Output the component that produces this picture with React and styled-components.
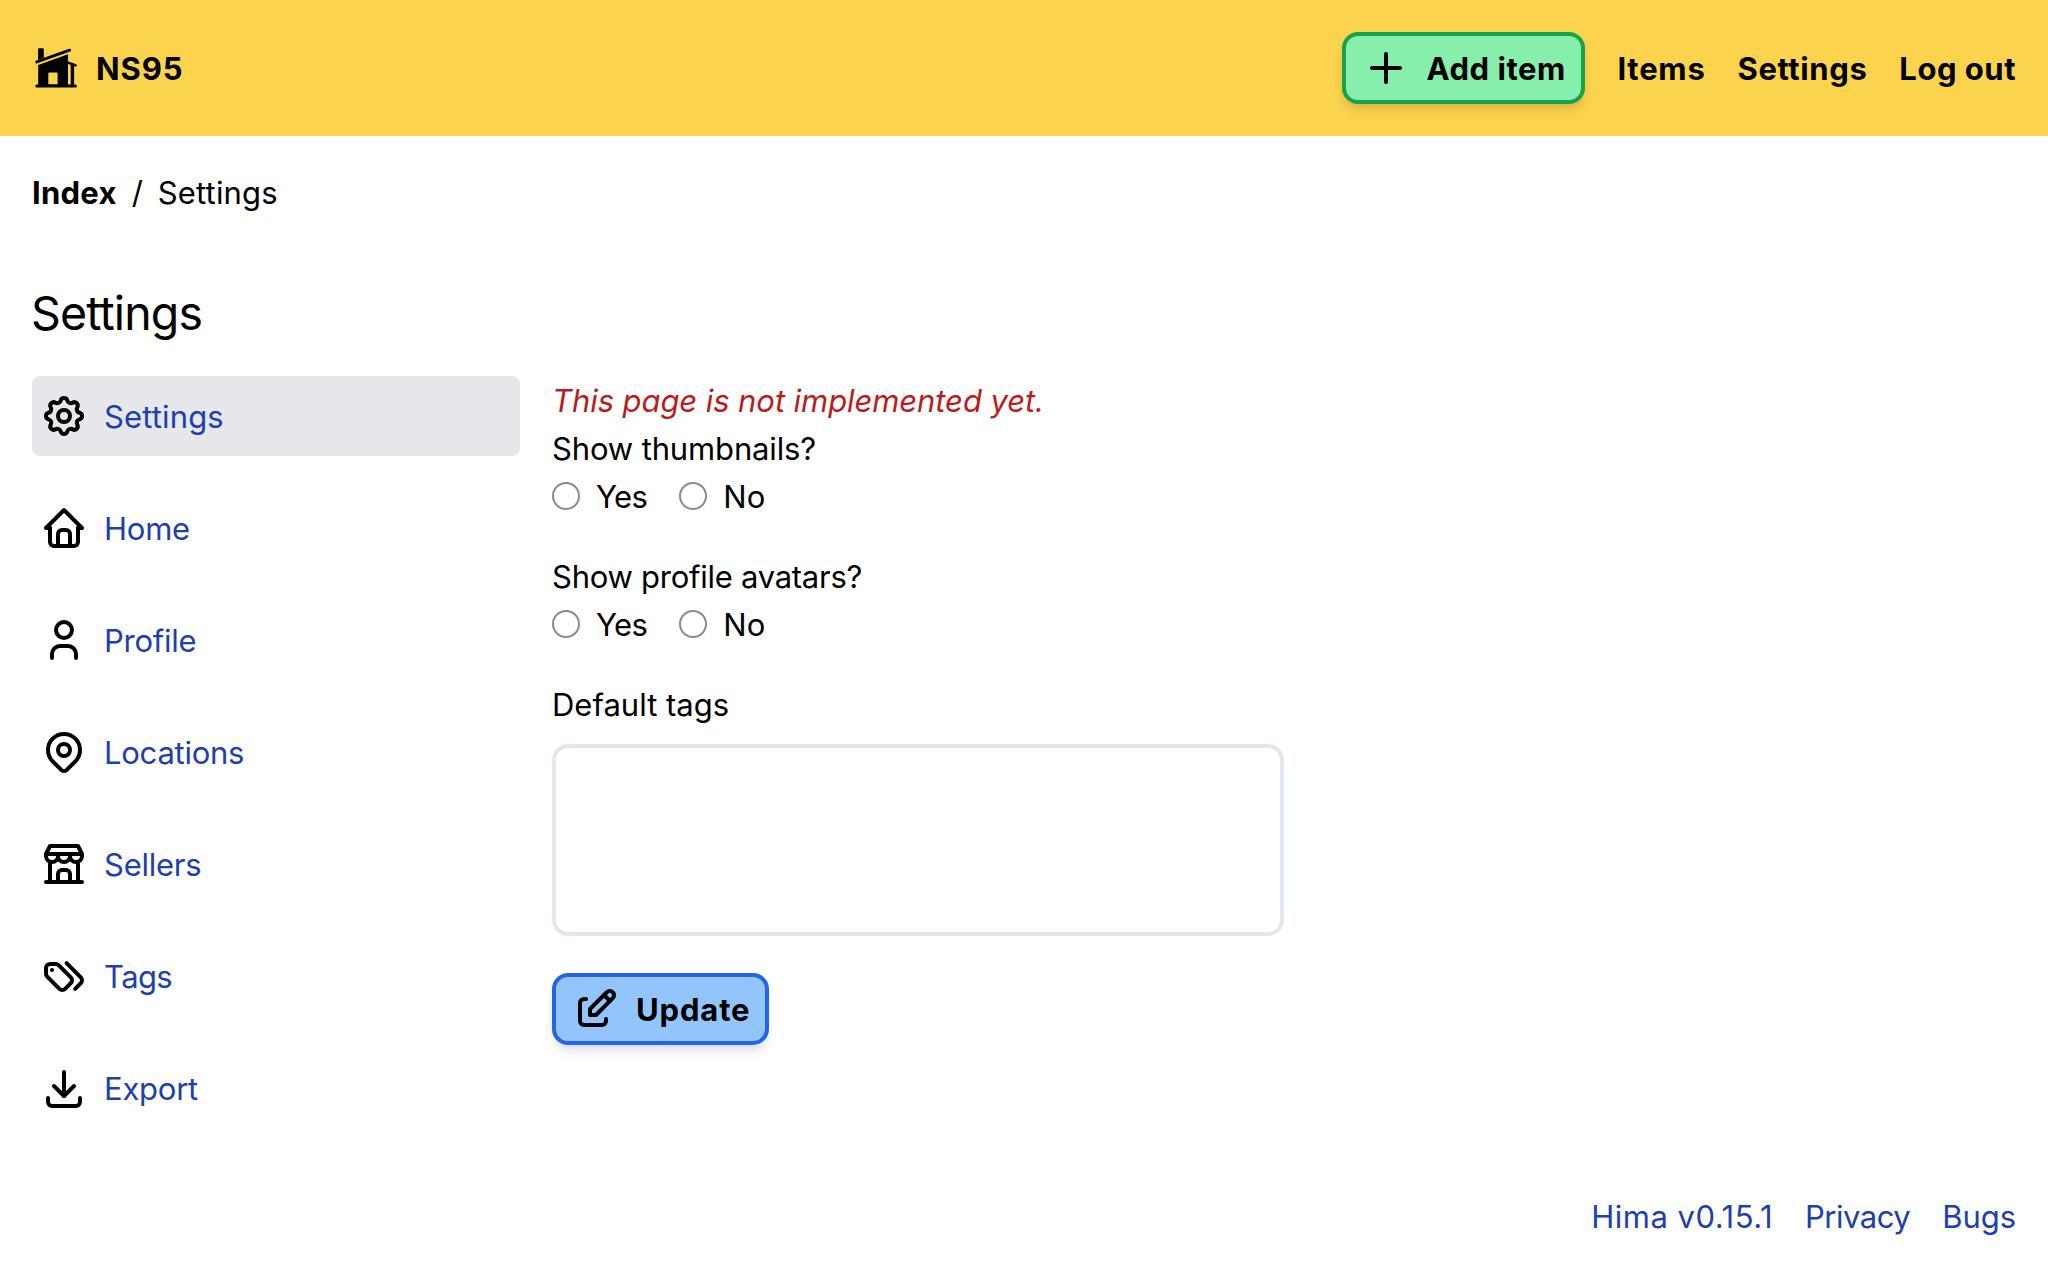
import React from 'react';
import styled, { createGlobalStyle, css } from 'styled-components';

const GlobalStyle = createGlobalStyle`
  *, *::before, *::after { box-sizing: border-box; }
  body {
    margin: 0;
    background: #ffffff;
    color: #000000;
    font-family: Inter, 'Liberation Sans', sans-serif;
    font-size: 31px;
    line-height: 48px;
  }
  h1, p { margin: 0; font-weight: 400; }
`;

const Page = styled.div`
  display: flex;
  flex-direction: column;
  min-height: 1264px;
`;

const Text = styled.span`
  display: block;
  margin: 1px 0 -1px;
  white-space: nowrap;
  letter-spacing: ${({ $track = 0 }) => $track}px;
`;

const Icon = styled.svg.attrs({
  viewBox: '0 0 24 24',
  fill: 'none',
  stroke: 'currentColor',
  strokeLinecap: 'round',
  strokeLinejoin: 'round',
})`
  flex: none;
  width: 48px;
  height: 48px;
  color: #000000;
  stroke-width: 2;
`;

/* ---------- header ---------- */

const Header = styled.header`
  display: flex;
  align-items: center;
  justify-content: space-between;
  height: 136px;
  padding: 0 32px;
  background: #fcd34d;
`;

const Brand = styled.a`
  display: flex;
  align-items: center;
  gap: 16px;
  font-weight: 700;
`;

const Logo = styled.svg`
  width: 48px;
  height: 48px;
`;

const TopNav = styled.nav`
  display: flex;
  align-items: center;
  gap: 32px;
`;

const TopLink = styled(Text).attrs({ as: 'a' })`
  font-weight: 700;
`;

const tones = {
  green: css`
    background: #86efac;
    border-color: #16a34a;
  `,
  blue: css`
    background: #93c5fd;
    border-color: #2563eb;
  `,
};

const Button = styled.button`
  display: inline-flex;
  align-items: center;
  gap: 16px;
  width: ${({ $width }) => $width}px;
  height: 72px;
  padding: 0 16px;
  border: 4px solid;
  border-radius: 16px;
  color: #000000;
  font: inherit;
  font-weight: 700;
  box-shadow: 0 8px 12px -2px rgba(0, 0, 0, 0.1), 0 4px 8px -4px rgba(0, 0, 0, 0.1);
  ${({ $tone }) => tones[$tone]}
`;

/* ---------- page body ---------- */

const Breadcrumb = styled.nav`
  display: flex;
  gap: 15px;
  padding: 32px 32px 0;
`;

const CrumbLink = styled(Text).attrs({ as: 'a' })`
  font-weight: 700;
`;

const Title = styled.h1`
  padding: 67px 31px 0;
  margin-bottom: 1px;
  font-size: 46.5px;
  line-height: 60px;
  letter-spacing: -0.85px;
`;

const Columns = styled.main`
  display: grid;
  grid-template-columns: 488px 732px;
  gap: 32px;
  padding: 32px 32px 0;
`;

const SideNav = styled.nav`
  display: flex;
  flex-direction: column;
  gap: 32px;
`;

const SideLink = styled.a`
  display: flex;
  align-items: center;
  gap: 16px;
  height: 80px;
  padding: 0 8px;
  border-radius: 8px;
  color: #1e40af;
  background: ${({ $active }) => ($active ? '#e5e7eb' : 'transparent')};
`;

const Form = styled.form`
  display: flex;
  flex-direction: column;
  align-items: flex-start;
`;

const Notice = styled(Text).attrs({ as: 'p' })`
  color: #b91c1c;
  font-style: italic;
`;

const Field = styled.div`
  display: flex;
  flex-direction: column;
  margin-bottom: 32px;
`;

const Label = styled(Text)`
  height: 48px;
`;

const Options = styled.div`
  display: flex;
  gap: 32px;
`;

const Option = styled.label`
  display: flex;
  align-items: center;
  gap: 16px;
`;

const Radio = styled.input.attrs({ type: 'radio' })`
  appearance: none;
  width: 28px;
  height: 28px;
  margin: 0;
  border: 2px solid #8c8c8c;
  border-radius: 50%;
  background: #ffffff;
`;

const TagsInput = styled.textarea`
  display: block;
  width: 732px;
  height: 192px;
  margin: 16px 0 5px;
  padding: 12px 16px;
  border: 4px solid #e3e6ec;
  border-radius: 16px;
  background: #ffffff;
  font: inherit;
  resize: none;
`;

const Footer = styled.footer`
  display: flex;
  justify-content: flex-end;
  gap: 32px;
  margin-top: auto;
  padding: 0 32px 24px;
  color: #1e40af;
`;

/* ---------- icons ---------- */

const paths = {
  gear: (
    <>
      <path d="M10.325 4.317c.426-1.756 2.924-1.756 3.35 0a1.724 1.724 0 0 0 2.573 1.066c1.543-.94 3.31.826 2.37 2.37a1.724 1.724 0 0 0 1.065 2.572c1.756.426 1.756 2.924 0 3.35a1.724 1.724 0 0 0-1.066 2.573c.94 1.543-.826 3.31-2.37 2.37a1.724 1.724 0 0 0-2.572 1.065c-.426 1.756-2.924 1.756-3.35 0a1.724 1.724 0 0 0-2.573-1.066c-1.543.94-3.31-.826-2.37-2.37a1.724 1.724 0 0 0-1.065-2.572c-1.756-.426-1.756-2.924 0-3.35a1.724 1.724 0 0 0 1.066-2.573c-.94-1.543.826-3.31 2.37-2.37 1 .608 2.296.07 2.572-1.065z" />
      <circle cx="12" cy="12" r="3" />
    </>
  ),
  home: (
    <>
      <path d="M5 12H3l9-9 9 9h-2" />
      <path d="M5 12v7a2 2 0 0 0 2 2h10a2 2 0 0 0 2-2v-7" />
      <path d="M9 21v-6a2 2 0 0 1 2-2h2a2 2 0 0 1 2 2v6" />
    </>
  ),
  user: (
    <>
      <circle cx="12" cy="7" r="4" />
      <path d="M6 21v-2a4 4 0 0 1 4-4h4a4 4 0 0 1 4 4v2" />
    </>
  ),
  pin: (
    <>
      <circle cx="12" cy="11" r="3" />
      <path d="M17.657 16.657 13.414 20.9a2 2 0 0 1-2.827 0l-4.244-4.243a8 8 0 1 1 11.314 0z" />
    </>
  ),
  store: (
    <>
      <path d="M3 21h18" />
      <path d="M3 7v1a3 3 0 0 0 6 0V7m0 1a3 3 0 0 0 6 0V7m0 1a3 3 0 0 0 6 0V7H3l2-4h14l2 4" />
      <path d="M5 21V10.85M19 21V10.85" />
      <path d="M9 21v-4a2 2 0 0 1 2-2h2a2 2 0 0 1 2 2v4" />
    </>
  ),
  tags: (
    <>
      <path d="M7.859 6H5.025A2.025 2.025 0 0 0 3 8.025v2.834c0 .537.213 1.052.593 1.432l6.116 6.116a2.025 2.025 0 0 0 2.864 0l2.834-2.834a2.025 2.025 0 0 0 0-2.864L9.29 6.593A2.025 2.025 0 0 0 7.859 6z" />
      <path d="m17.573 18.407 2.834-2.834a2.025 2.025 0 0 0 0-2.864L13.29 5.593" />
      <path d="M6 9h-.01" />
    </>
  ),
  download: (
    <>
      <path d="M4 17v2a2 2 0 0 0 2 2h12a2 2 0 0 0 2-2v-2" />
      <path d="m7 11 5 5 5-5" />
      <path d="M12 4v12" />
    </>
  ),
  plus: <path d="M12 5v14M5 12h14" />,
  edit: (
    <>
      <path d="M7 7H6a2 2 0 0 0-2 2v9a2 2 0 0 0 2 2h9a2 2 0 0 0 2-2v-1" />
      <path d="M20.385 6.585a2.1 2.1 0 0 0-2.97-2.97L9 12v3h3z" />
      <path d="m16 5 3 3" />
    </>
  ),
};

const CabinLogo = () => (
  <Logo viewBox="0 0 48 48" fill="#000000">
    <path d="M6 5.5Q6 4.3 7.2 4.3h3.4q1.2 0 1.2 1.2v8.3L6 16z" />
    <path d="M4.8 17.9 37.6 6.2" stroke="#000000" strokeWidth="2.9" strokeLinecap="round" />
    <path fillRule="evenodd" d="M6.2 20.9 36 10.3V42H6.2zM17.4 28.4q-1.1 0-1.1 1.1v10.9h9.3V29.5q0-1.1-1.1-1.1z" />
    <path d="M36 18.6l7.6 2.8" stroke="#000000" strokeWidth="2.6" strokeLinecap="round" />
    <path d="M38.7 19.4h3.4V42h-3.4z" />
    <path d="M4.8 42h38.6" stroke="#000000" strokeWidth="3.1" strokeLinecap="round" />
  </Logo>
);

const sideItems = [
  { icon: 'gear', label: 'Settings', track: 0.15, active: true },
  { icon: 'home', label: 'Home', track: -0.25 },
  { icon: 'user', label: 'Profile', track: -0.26 },
  { icon: 'pin', label: 'Locations', track: -0.25 },
  { icon: 'store', label: 'Sellers', track: -0.24 },
  { icon: 'tags', label: 'Tags', track: -0.6 },
  { icon: 'download', label: 'Export', track: -0.25 },
];

const YesNo = ({ name }) => (
  <Options>
    <Option>
      <Radio name={name} />
      <Text $track={-0.6}>Yes</Text>
    </Option>
    <Option>
      <Radio name={name} />
      <Text $track={0.1}>No</Text>
    </Option>
  </Options>
);

export default function App() {
  return (
    <Page>
      <GlobalStyle />
      <Header>
        <Brand>
          <CabinLogo />
          <Text $track={0.9}>NS95</Text>
        </Brand>
        <TopNav>
          <Button $tone="green" $width={243}>
            <Icon>{paths.plus}</Icon>
            <Text $track={0.55}>Add item</Text>
          </Button>
          <TopLink $track={0.75}>Items</TopLink>
          <TopLink $track={0.6}>Settings</TopLink>
          <TopLink $track={0.5}>Log out</TopLink>
        </TopNav>
      </Header>

      <Breadcrumb>
        <CrumbLink $track={0.25}>Index</CrumbLink>
        <Text>/</Text>
        <Text $track={0.15}>Settings</Text>
      </Breadcrumb>

      <Title>Settings</Title>

      <Columns>
        <SideNav>
          {sideItems.map(({ icon, label, track, active }) => (
            <SideLink key={label} $active={active}>
              <Icon>{paths[icon]}</Icon>
              <Text $track={track}>{label}</Text>
            </SideLink>
          ))}
        </SideNav>

        <Form>
          <Notice $track={-0.08}>This page is not implemented yet.</Notice>
          <Field>
            <Label $track={-0.14}>Show thumbnails?</Label>
            <YesNo name="thumbnails" />
          </Field>
          <Field>
            <Label $track={-0.26}>Show profile avatars?</Label>
            <YesNo name="avatars" />
          </Field>
          <Field>
            <Label>Default tags</Label>
            <TagsInput />
          </Field>
          <Button type="button" $tone="blue" $width={217}>
            <Icon>{paths.edit}</Icon>
            <Text $track={0.85}>Update</Text>
          </Button>
        </Form>
      </Columns>

      <Footer>
        <Text $track={0.5}>Hima v0.15.1</Text>
        <Text $track={-0.5}>Privacy</Text>
        <Text $track={-0.05}>Bugs</Text>
      </Footer>
    </Page>
  );
}
